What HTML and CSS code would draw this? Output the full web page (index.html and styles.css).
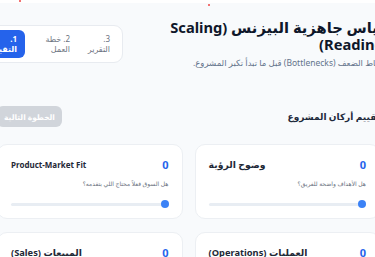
FILE: index.html
```html
<!DOCTYPE html>
<html lang="ar">
<head>
<meta charset="utf-8">
<title>مقياس جاهزية البيزنس</title>
<link rel="stylesheet" href="styles.css">
</head>
<body>
<div class="topstrip"></div>
<span class="dot dot-a"></span>
<span class="dot dot-b"></span>
<div class="page" dir="rtl">
  <header class="hero">
    <div class="titles">
      <h1>مقياس جاهزية البيزنس (Scaling Readiness)</h1>
      <p>حدد نقاط الضعف (Bottlenecks) قبل ما تبدأ تكبر المشروع.</p>
    </div>
    <nav class="steps">
      <div class="step s1 active">1. التقييم</div>
      <div class="step s2">2. خطة العمل</div>
      <div class="step s3">3. التقرير</div>
    </nav>
  </header>
  <main class="content">
    <div class="section-head">
      <h2>تقييم أركان المشروع</h2>
      <button class="next" disabled>الخطوة التالية</button>
    </div>
    <div class="grid">
      <div class="card">
        <div class="card-head"><span class="value">0</span><span class="name">وضوح الرؤية</span></div>
        <p class="question">هل الأهداف واضحة للفريق؟</p>
        <input class="slider" type="range" min="0" max="10" value="0">
      </div>
      <div class="card">
        <div class="card-head"><span class="value">0</span><span class="name latin">Product-Market Fit</span></div>
        <p class="question">هل السوق فعلاً محتاج اللي بتقدمه؟</p>
        <input class="slider" type="range" min="0" max="10" value="0">
      </div>
      <div class="card">
        <div class="card-head"><span class="value">0</span><span class="name">العمليات (Operations)</span></div>
        <p class="question">هل عندك أنظمة واضحة للشغل اليومي؟</p>
        <input class="slider" type="range" min="0" max="10" value="0">
      </div>
      <div class="card">
        <div class="card-head"><span class="value">0</span><span class="name">المبيعات (Sales)</span></div>
        <p class="question">هل عندك مصدر ثابت للعملاء؟</p>
        <input class="slider" type="range" min="0" max="10" value="0">
      </div>
    </div>
  </main>
</div>
</body>
</html>
```
FILE: styles.css
```css
html, body {
  margin: 0;
  padding: 0;
}
body {
  background: #f8fafc;
  font-family: "Noto Sans", "DejaVu Sans", sans-serif;
  overflow: hidden;
  width: 375px;
  height: 257px;
  position: relative;
}
.topstrip {
  height: 3px;
  background: #ffffff;
}
.dot {
  position: absolute;
  width: 2px;
  height: 2px;
  border-radius: 50%;
  background: #ef4444;
}
.dot-a { left: 19px; top: 0; }
.dot-b { left: 208px; top: 4px; }

.page {
  width: 420px;
  margin-left: -22px;
  direction: rtl;
}
.hero {
  display: flex;
  justify-content: space-between;
  align-items: center;
  padding-top: 16px;
}
.titles {
  width: 236px;
}
.titles h1 {
  margin: 0;
  font-size: 14.7px;
  line-height: 17px;
  font-weight: 700;
  color: #0f172a;
}
.titles p {
  margin: 4px 0 0;
  font-size: 8.5px;
  line-height: 12px;
  color: #64748b;
}
.steps {
  display: flex;
  flex-direction: row-reverse;
  gap: 4px;
  padding: 4px;
  background: #ffffff;
  border: 1px solid #e8ebf0;
  border-radius: 9px;
}
.step {
  box-sizing: border-box;
  height: 28px;
  padding: 4px 8px 0;
  font-size: 8px;
  line-height: 10px;
  color: #6b7280;
  border-radius: 6px;
  text-align: right;
}
.s1 { width: 42px; }
.s2 { width: 49px; }
.s3 { width: 36px; }
.step.active {
  background: #2563eb;
  color: #ffffff;
  font-weight: 700;
}

.content {
  padding: 0 18px 0 19px;
}
.section-head {
  display: flex;
  justify-content: space-between;
  align-items: center;
  margin-top: 37px;
}
.section-head h2 {
  margin: 0;
  font-size: 9px;
  font-weight: 700;
  color: #1e293b;
}
.next {
  width: 65px;
  height: 21px;
  border: 0;
  border-radius: 6px;
  background: #d1d5db;
  color: #ffffff;
  font-family: inherit;
  font-size: 7.5px;
  font-weight: 700;
  padding: 0;
}
.grid {
  display: grid;
  grid-template-columns: 1fr 1fr;
  column-gap: 12px;
  row-gap: 13px;
  margin-top: 17px;
}
.card {
  background: #ffffff;
  border: 1px solid #eceff3;
  border-radius: 10px;
  padding: 13px 13px 12px;
  height: 75px;
  box-sizing: border-box;
}
.card-head {
  display: flex;
  justify-content: space-between;
  align-items: center;
  height: 12px;
}
.value {
  font-size: 11px;
  font-weight: 700;
  color: #2563eb;
}
.name {
  font-size: 9.3px;
  font-weight: 700;
  color: #1f2937;
}
.name.latin {
  font-size: 8px;
}
.question {
  margin: 10px 0 0;
  font-size: 6px;
  line-height: 9px;
  color: #6b7280;
}
.slider {
  -webkit-appearance: none;
  appearance: none;
  display: block;
  width: 100%;
  height: 8px;
  margin: 11px 0 0;
  background: transparent;
}
.slider::-webkit-slider-runnable-track {
  height: 3px;
  background: #e8edf3;
  border-radius: 2px;
}
.slider::-webkit-slider-thumb {
  -webkit-appearance: none;
  appearance: none;
  width: 8px;
  height: 8px;
  margin-top: -2.5px;
  border-radius: 50%;
  background: #3b82f6;
  border: 0;
}
```
